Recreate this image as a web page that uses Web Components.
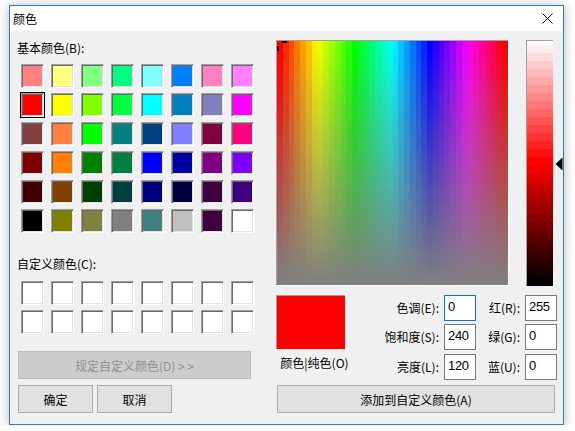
<!DOCTYPE html>
<html lang="zh">
<head>
<meta charset="utf-8">
<title>颜色</title>
<style>
  html, body { margin: 0; background: #fff; }
  body { font: 12px "Noto Sans CJK SC", "Liberation Sans", sans-serif; color: #000; }
</style>
</head>
<body>
<color-dialog></color-dialog>
<script>
const BASIC = [
  "#ff8080","#ffff80","#80ff80","#00ff80","#80ffff","#0080ff","#ff80c0","#ff80ff",
  "#ff0000","#ffff00","#80ff00","#00ff40","#00ffff","#0080c0","#8080c0","#ff00ff",
  "#804040","#ff8040","#00ff00","#008080","#004080","#8080ff","#800040","#ff0080",
  "#800000","#ff8000","#008000","#008040","#0000ff","#0000a0","#800080","#8000ff",
  "#400000","#804000","#004000","#004040","#000080","#000040","#400040","#400080",
  "#000000","#808000","#808040","#808080","#408080","#c0c0c0","#400040","#ffffff",
];

class ColorSwatch extends HTMLElement {
  constructor() {
    super();
    this.attachShadow({ mode: "open" });
    this.shadowRoot.innerHTML = `
      <style>
        :host {
          display: block;
          box-sizing: border-box;
          width: 23px;
          height: 24px;
          border-style: solid;
          border-width: 1px;
          border-color: #a0a0a0 #fff #fff #a0a0a0;
          box-shadow: inset 1px 1px #696969, inset -1px -1px #e3e3e3;
          background: var(--c, #fff);
        }
        :host([selected]) { outline: 1px solid #000; }
      </style>`;
    this.style.setProperty("--c", this.getAttribute("color") || "#fff");
  }
}
customElements.define("color-swatch", ColorSwatch);

class SwatchGrid extends HTMLElement {
  constructor() {
    super();
    this.attachShadow({ mode: "open" });
    this.shadowRoot.innerHTML = `
      <style>
        :host {
          display: grid;
          grid-template-columns: repeat(8, 23px);
          grid-auto-rows: 24px;
          column-gap: 7px;
          row-gap: 5px;
          margin-left: 4px;
        }
      </style>
      <slot></slot>`;
  }
}
customElements.define("swatch-grid", SwatchGrid);

class DlgButton extends HTMLElement {
  constructor() {
    super();
    this.attachShadow({ mode: "open" });
    this.shadowRoot.innerHTML = `
      <style>
        :host {
          display: flex;
          align-items: center;
          justify-content: center;
          box-sizing: border-box;
          height: 28px;
          border: 1px solid #adadad;
          background: #e1e1e1;
          color: #000;
        }
        :host([disabled]) {
          border-color: #bfbfbf;
          background: #cccccc;
          color: #909090;
        }
      </style>
      <slot></slot>`;
  }
}
customElements.define("dlg-button", DlgButton);

class ColorSpectrum extends HTMLElement {
  constructor() {
    super();
    this.attachShadow({ mode: "open" });
    this.shadowRoot.innerHTML = `
      <style>
        :host {
          display: block;
          position: relative;
          box-sizing: border-box;
          width: 233px;
          height: 246px;
          border-top: 1px solid #a0a0a0;
          border-left: 1px solid #a0a0a0;
          border-right: 1px solid #fff;
          border-bottom: 1px solid #fff;
        }
        canvas { display: block; }
        .h { position: absolute; left: 5px; top: 0; width: 5px; height: 2px; background: #000; }
        .v { position: absolute; left: 0; top: 5px; width: 2px; height: 5px; background: #000; }
      </style>
      <canvas width="231" height="244"></canvas>
      <div class="h"></div><div class="v"></div>`;
    const ctx = this.shadowRoot.querySelector("canvas").getContext("2d");
    const cols = 40, rows = 61;
    for (let i = 0; i < cols; i++) {
      for (let j = 0; j < rows; j++) {
        ctx.fillStyle = `hsl(${i * 360 / (cols - 1)}, ${100 - j * 100 / (rows - 1)}%, 50%)`;
        const x = Math.round(i * 231 / cols), y = Math.round(j * 244 / rows);
        ctx.fillRect(x, y, Math.round((i + 1) * 231 / cols) - x, Math.round((j + 1) * 244 / rows) - y);
      }
    }
  }
}
customElements.define("color-spectrum", ColorSpectrum);

class LumBar extends HTMLElement {
  constructor() {
    super();
    this.attachShadow({ mode: "open" });
    this.shadowRoot.innerHTML = `
      <style>
        :host {
          display: block;
          position: relative;
          box-sizing: border-box;
          width: 27px;
          height: 246px;
          border-top: 1px solid #a0a0a0;
          border-left: 1px solid #a0a0a0;
        }
        canvas { display: block; }
        svg { position: absolute; left: 28px; top: 116px; }
      </style>
      <canvas width="26" height="245"></canvas>
      <svg width="8" height="14" viewBox="0 0 8 14"><path d="M7.5 0.5V13.5L0.5 7Z" fill="#000"/></svg>`;
    const ctx = this.shadowRoot.querySelector("canvas").getContext("2d");
    ctx.fillStyle = "#fff";
    ctx.fillRect(0, 0, 26, 4);
    for (let i = 0; i < 30; i++) {
      ctx.fillStyle = `hsl(0, 100%, ${100 - (i + 1) * 100 / 30}%)`;
      const y = 4 + Math.round(i * 241 / 30);
      ctx.fillRect(0, y, 26, 4 + Math.round((i + 1) * 241 / 30) - y);
    }
  }
}
customElements.define("lum-bar", LumBar);

class NumField extends HTMLElement {
  constructor() {
    super();
    this.attachShadow({ mode: "open" });
    this.shadowRoot.innerHTML = `
      <style>
        :host {
          display: block;
          box-sizing: border-box;
          width: 32px;
          height: 26px;
          padding-left: 3px;
          border: 1px solid #7a7a7a;
          background: #fff;
          font: 13px/22px "Liberation Sans", sans-serif;
          letter-spacing: -.3px;
        }
        :host([focused]) { border-color: #0078d7; }
      </style>
      <slot></slot>`;
  }
}
customElements.define("num-field", NumField);

class ColorFields extends HTMLElement {
  constructor() {
    super();
    this.attachShadow({ mode: "open" });
    const rows = [
      ["色调(E):", "0", "红(R):", "255"],
      ["饱和度(S):", "240", "绿(G):", "0"],
      ["亮度(L):", "120", "蓝(U):", "0"],
    ];
    this.shadowRoot.innerHTML = `
      <style>
        :host {
          display: grid;
          grid-template-columns: 94px 32px 49px 32px;
          grid-template-rows: 29px 30px 26px;
          column-gap: 0;
        }
        .l { text-align: right; padding: 4px 5px 0 0; line-height: 18px; white-space: nowrap; }
      </style>
      ${rows.map((r, i) => `
        <div class="l">${r[0]}</div><num-field ${i === 0 ? "focused" : ""}>${r[1]}</num-field>
        <div class="l">${r[2]}</div><num-field>${r[3]}</num-field>`).join("")}`;
  }
}
customElements.define("color-fields", ColorFields);

class ColorDialog extends HTMLElement {
  constructor() {
    super();
    this.attachShadow({ mode: "open" });
    this.shadowRoot.innerHTML = `
      <style>
        :host {
          display: block;
          box-sizing: border-box;
          width: 555px;
          height: 420px;
          margin: 5px 0 0 9px;
          border: 1px solid #1883d7;
          background: #f0f0f0;
          box-shadow: 0 1px 10px rgba(0, 0, 0, .3);
        }
        .title {
          display: flex;
          align-items: center;
          justify-content: space-between;
          height: 25px;
          padding: 0 10px 0 3px;
          background: #fff;
        }
        .title svg { display: block; }
        .main { display: flex; padding: 9px 0 0 7px; }
        .left { width: 259px; }
        .lbl { height: 16px; line-height: 16px; }
        .basic { margin-top: 8px; }
        .custom-lbl { margin-top: 23px; }
        .custom { margin-top: 9px; }
        .define { width: 233px; margin: 17px 0 0 1px; }
        .btns { display: flex; gap: 4px; margin: 6px 0 0 1px; }
        .btns dlg-button { width: 75px; }
        .top { display: flex; gap: 17px; }
        .lower { display: flex; margin-top: 9px; height: 85px; }
        .preview { width: 74px; }
        .swatch { height: 54px; box-sizing: border-box; background: #f00; border-top: 1px solid #a0a0a0; border-left: 1px solid #a0a0a0; width: 69px; }
        .cap { width: 77px; margin-top: 5px; line-height: 18px; white-space: nowrap; text-align: center; }
        .add { width: 278px; margin: 5px 0 0 1px; }
      </style>
      <div class="title">
        <span>颜色</span>
        <svg width="11" height="11" viewBox="0 0 11 11"><path d="M.5.5l10 10M10.5.5l-10 10" stroke="#000" stroke-width="1" fill="none"/></svg>
      </div>
      <div class="main">
        <div class="left">
          <div class="lbl">基本颜色(B):</div>
          <swatch-grid class="basic">
            ${BASIC.map((c, i) => `<color-swatch color="${c}" ${i === 8 ? "selected" : ""}></color-swatch>`).join("")}
          </swatch-grid>
          <div class="lbl custom-lbl">自定义颜色(C):</div>
          <swatch-grid class="custom">
            ${Array(16).fill(`<color-swatch color="#fff"></color-swatch>`).join("")}
          </swatch-grid>
          <dlg-button class="define" disabled>规定自定义颜色(D) &gt; &gt;</dlg-button>
          <div class="btns">
            <dlg-button>确定</dlg-button>
            <dlg-button>取消</dlg-button>
          </div>
        </div>
        <div class="right">
          <div class="top">
            <color-spectrum></color-spectrum>
            <lum-bar></lum-bar>
          </div>
          <div class="lower">
            <div class="preview">
              <div class="swatch"></div>
              <div class="cap">颜色|纯色(O)</div>
            </div>
            <color-fields></color-fields>
          </div>
          <dlg-button class="add">添加到自定义颜色(A)</dlg-button>
        </div>
      </div>`;
  }
}
customElements.define("color-dialog", ColorDialog);
</script>
</body>
</html>
